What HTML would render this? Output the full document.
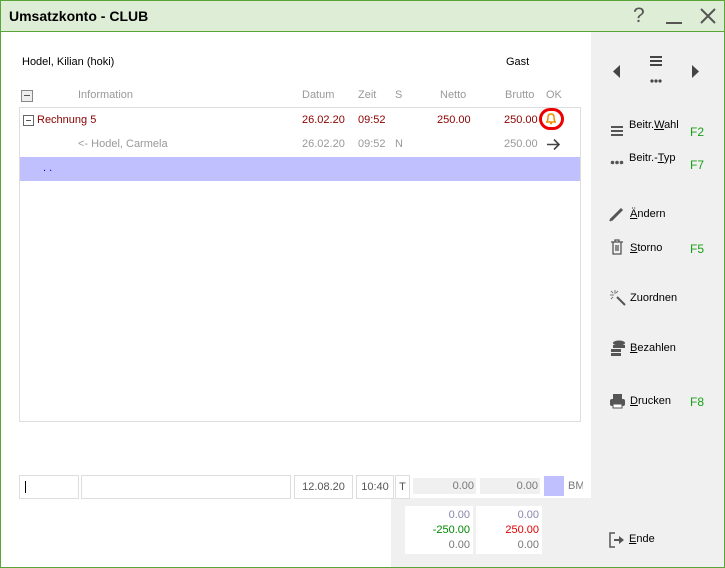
<!DOCTYPE html><html><head><style>
body{margin:0;width:725px;height:568px;overflow:hidden;font-family:"Liberation Sans",sans-serif;font-size:11px;color:#000;background:#fff}
.a{position:absolute;white-space:nowrap}
.win{position:absolute;left:0;top:0;width:723px;height:566px;border:1px solid #5aa538;background:#fff}
.g{color:#999}.r{color:#8b0000}.k{color:#17a017}
.box{position:absolute;border:1px solid #ddd;background:#fff}
.f{position:absolute;background:#fff;text-align:right;color:#777;height:18px;line-height:18px;padding-right:3px;box-sizing:border-box}
</style></head><body><div class="win">
<div class="a" style="left:0;top:0;width:723px;height:30px;background:#deeed6;border-bottom:1px solid #5aa538"></div>
<div class="a" style="left:8px;top:7px;font-size:14px;font-weight:bold">Umsatzkonto - CLUB</div>
<div class="a" style="left:632px;top:3px;font-size:21px;color:#555">?</div>
<div class="a" style="left:665px;top:21px;width:16px;height:2px;background:#555"></div>
<svg class="a" style="left:699px;top:7px" width="16" height="16"><path d="M1 1L15 15M15 1L1 15" stroke="#555" stroke-width="2"/></svg>
<div class="a" style="left:590px;top:31px;width:133px;height:535px;background:#f0f0f0"></div>
<div class="a" style="left:390px;top:497px;width:200px;height:69px;background:#f0f0f0"></div>
<div class="a" style="left:21px;top:55px">Hodel, Kilian (hoki)</div>
<div class="a" style="left:505px;top:55px">Gast</div>
<div class="a" style="left:20px;top:89px;width:10px;height:10px;border:1px solid #888;background:#eee"><div style="margin:4px 2px;height:1px;background:#555"></div></div>
<div class="a g" style="left:77px;top:88px">Information</div>
<div class="a g" style="left:301px;top:88px">Datum</div>
<div class="a g" style="left:357px;top:88px">Zeit</div>
<div class="a g" style="left:394px;top:88px">S</div>
<div class="a g" style="left:439px;top:88px">Netto</div>
<div class="a g" style="left:504px;top:88px">Brutto</div>
<div class="a g" style="left:545px;top:88px">OK</div>
<div class="box" style="left:18px;top:106px;width:560px;height:313px"></div>
<div class="a" style="left:22px;top:114px;width:9px;height:9px;border:1px solid #666"><div style="margin:4px 2px;height:1px;background:#555"></div></div>
<div class="a r" style="left:36px;top:113px">Rechnung 5</div>
<div class="a r" style="left:301px;top:113px">26.02.20</div>
<div class="a r" style="left:357px;top:113px">09:52</div>
<div class="a r" style="left:436px;top:113px">250.00</div>
<div class="a r" style="left:503px;top:113px">250.00</div>
<div class="a" style="left:538px;top:107px;width:25px;height:22px;border:3px solid #e00;border-radius:12px;box-sizing:border-box;background:#fff"></div>
<svg class="a" style="left:544px;top:111px" width="12" height="13"><path d="M2 10Q3 8 3 5Q3 2 6 2Q9 2 9 5Q9 8 10 10ZM1 10H11M5 11.5H7" stroke="#f09000" stroke-width="1.5" fill="none"/></svg>
<div class="a g" style="left:77px;top:137px">&lt;- Hodel, Carmela</div>
<div class="a g" style="left:301px;top:137px">26.02.20</div>
<div class="a g" style="left:357px;top:137px">09:52</div>
<div class="a g" style="left:394px;top:137px">N</div>
<div class="a g" style="left:503px;top:137px">250.00</div>
<svg class="a" style="left:545px;top:137px" width="15" height="13"><path d="M1 6.5H13M8 1.5L13 6.5L8 11.5" stroke="#444" stroke-width="1.6" fill="none"/></svg>
<div class="a" style="left:19px;top:156px;width:560px;height:24px;background:#c0c0ff"></div>
<div class="a" style="left:42px;top:161px;color:#00f">. .</div>
<svg class="a" style="left:611px;top:64px" width="8" height="13"><path d="M8 0L1 6.5L8 13Z" fill="#444"/></svg>
<svg class="a" style="left:691px;top:64px" width="8" height="13"><path d="M0 0L7 6.5L0 13Z" fill="#444"/></svg>
<svg class="a" style="left:648px;top:54px" width="14" height="30"><path d="M1 2H13M1 6H13M1 10H13" stroke="#444" stroke-width="2"/><circle cx="3" cy="26" r="1.6" fill="#444"/><circle cx="7" cy="26" r="1.6" fill="#444"/><circle cx="11" cy="26" r="1.6" fill="#444"/></svg>
<svg class="a" style="left:609px;top:124px" width="14" height="12"><path d="M1 2H13M1 6H13M1 10H13" stroke="#555" stroke-width="2"/></svg>
<div class="a" style="left:628px;top:118px">Beitr.<u>W</u>ahl</div><div class="a k" style="left:689px;top:124px;font-size:12px">F2</div>
<svg class="a" style="left:609px;top:159px" width="14" height="5"><circle cx="2.5" cy="2.5" r="1.8" fill="#555"/><circle cx="7" cy="2.5" r="1.8" fill="#555"/><circle cx="11.5" cy="2.5" r="1.8" fill="#555"/></svg>
<div class="a" style="left:628px;top:151px">Beitr.-<u>T</u>yp</div><div class="a k" style="left:689px;top:157px;font-size:12px">F7</div>
<svg class="a" style="left:608px;top:205px" width="16" height="16"><path d="M2 14L13 3" stroke="#555" stroke-width="3"/><path d="M1 15L3 12" stroke="#555" stroke-width="2"/></svg>
<div class="a" style="left:629px;top:207px"><u>Ä</u>ndern</div>
<svg class="a" style="left:609px;top:238px" width="14" height="16"><path d="M1 3H13M5 3V1H9V3M3 3V15H11V3M6 6V12M8 6V12" stroke="#555" stroke-width="1.3" fill="none"/></svg>
<div class="a" style="left:629px;top:241px"><u>S</u>torno</div><div class="a k" style="left:689px;top:241px;font-size:12px">F5</div>
<svg class="a" style="left:609px;top:289px" width="16" height="16"><path d="M7 7L15 15" stroke="#555" stroke-width="2"/><path d="M5 0V4M0 5H4M1 1L3 3M8 1L6 3M1 9L3 7" stroke="#777" stroke-width="1"/></svg>
<div class="a" style="left:629px;top:291px">Zuordnen</div>
<svg class="a" style="left:609px;top:339px" width="16" height="16"><ellipse cx="9" cy="3" rx="6" ry="2.5" fill="#555"/><rect x="3" y="5" width="12" height="3" fill="#555"/><rect x="1" y="9" width="10" height="3" fill="#555"/><rect x="1" y="13" width="10" height="3" fill="#555"/></svg>
<div class="a" style="left:629px;top:341px"><u>B</u>ezahlen</div>
<svg class="a" style="left:608px;top:392px" width="17" height="16"><rect x="4" y="1" width="9" height="5" fill="#555"/><rect x="1" y="6" width="15" height="7" rx="2" fill="#555"/><rect x="4" y="11" width="9" height="4" fill="#fff" stroke="#555"/></svg>
<div class="a" style="left:629px;top:394px"><u>D</u>rucken</div><div class="a k" style="left:689px;top:394px;font-size:12px">F8</div>
<svg class="a" style="left:608px;top:531px" width="16" height="16"><path d="M6 1H1V15H6" stroke="#555" stroke-width="1.5" fill="none"/><path d="M5 7H10V4L15 8L10 12V9H5Z" fill="#555"/></svg>
<div class="a" style="left:628px;top:532px"><u>E</u>nde</div>
<div class="box" style="left:18px;top:474px;width:58px;height:22px"><div style="margin:5px 5px;width:1px;height:12px;background:#000"></div></div>
<div class="box" style="left:80px;top:474px;width:208px;height:22px"></div>
<div class="box" style="left:293px;top:474px;width:57px;height:22px;color:#555;text-align:center;line-height:22px">12.08.20</div>
<div class="box" style="left:355px;top:474px;width:36px;height:22px;color:#555;text-align:center;line-height:22px">10:40</div>
<div class="box" style="left:394px;top:474px;width:13px;height:22px;color:#555;text-align:center;line-height:22px">T</div>
<div class="a" style="left:412px;top:477px;width:61px;height:16px;background:#f0f0f0;text-align:right;color:#777;line-height:16px;padding-right:2px">0.00</div>
<div class="a" style="left:479px;top:477px;width:58px;height:16px;background:#f0f0f0;text-align:right;color:#777;line-height:16px;padding-right:2px">0.00</div>
<div class="a" style="left:543px;top:475px;width:20px;height:20px;background:#c0c0ff"></div>
<div class="a" style="left:567px;top:479px;color:#777;width:15px;overflow:hidden">BM</div>
<div class="f" style="left:404px;top:505px;width:68px;color:#88a">0.00</div>
<div class="f" style="left:475px;top:505px;width:66px;color:#88a">0.00</div>
<div class="f" style="left:404px;top:520px;width:68px;color:#080">-250.00</div>
<div class="f" style="left:475px;top:520px;width:66px;color:#d00">250.00</div>
<div class="f" style="left:404px;top:535px;width:68px">0.00</div>
<div class="f" style="left:475px;top:535px;width:66px">0.00</div>
</div></body></html>
